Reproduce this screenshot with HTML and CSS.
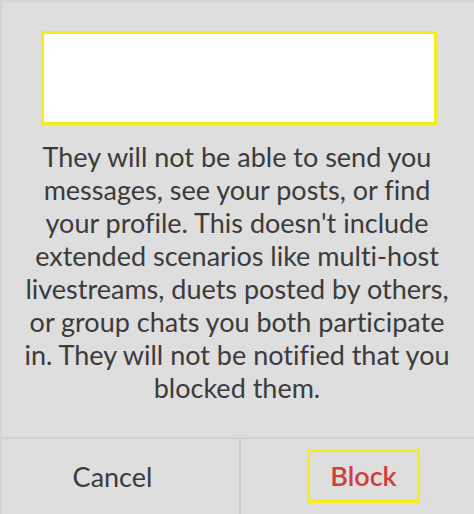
FILE: index.html
```html
<!DOCTYPE html>
<html lang="en">
<head>
  <meta charset="UTF-8">
  <meta name="viewport" content="width=device-width,initial-scale=1">
  <title>Block user</title>
  <link rel="stylesheet" href="styles.css">
</head>
<body>
  <div class="dialog">
    <div class="dialog-title"></div>
    <p class="dialog-message">They will not be able to send you messages, see your posts, or find your profile. This doesn't include extended scenarios like multi-host livestreams, duets posted by others, or group chats you both participate in. They will not be notified that you blocked them.</p>
    <div class="dialog-actions">
      <button class="action action-cancel">Cancel</button>
      <button class="action action-block"><span class="highlight">Block</span></button>
    </div>
  </div>
</body>
</html>
```
FILE: styles.css
```css
:root { --bg-color: #dedede; --text-color: #3b3b3b; --danger-color: #cf3f39; --highlight-color: #f6eb1c; --divider-color: #d0d0d0; }
html, body { height: 100%; }
body { margin: 0; background: var(--bg-color); font-family: Lato, "Open Sans", sans-serif; font-variant-ligatures: none; color: var(--text-color); }
.dialog { height: 100%; box-sizing: border-box; border-top: 2px solid #d6d6d6; border-left: 2px solid #d4d4d4; display: flex; flex-direction: column; }
.dialog-title { height: 88px; margin: 29px 37px 0 39px; background: #ffffff; border: 3px solid var(--highlight-color); }
.dialog-message { margin: 15px 0 0; padding: 0 20px 0 18px; font-size: 27px; line-height: 33px; text-align: center; }
.dialog-actions { margin-top: 33px; flex: 1; display: flex; border-top: 2px solid var(--divider-color); }
.action { flex: 1; background: none; border: none; margin: 0; font-family: inherit; font-variant-ligatures: none; font-size: 27px; color: var(--text-color); display: flex; align-items: center; justify-content: center; padding: 0 0 1px; }
.action-cancel { padding-right: 16px; border-right: 2px solid var(--divider-color); }
.action-block { padding-left: 12px; color: var(--danger-color); font-weight: 600; }
.highlight { border: 3px solid var(--highlight-color); padding: 7px 20px 8px; }
```
